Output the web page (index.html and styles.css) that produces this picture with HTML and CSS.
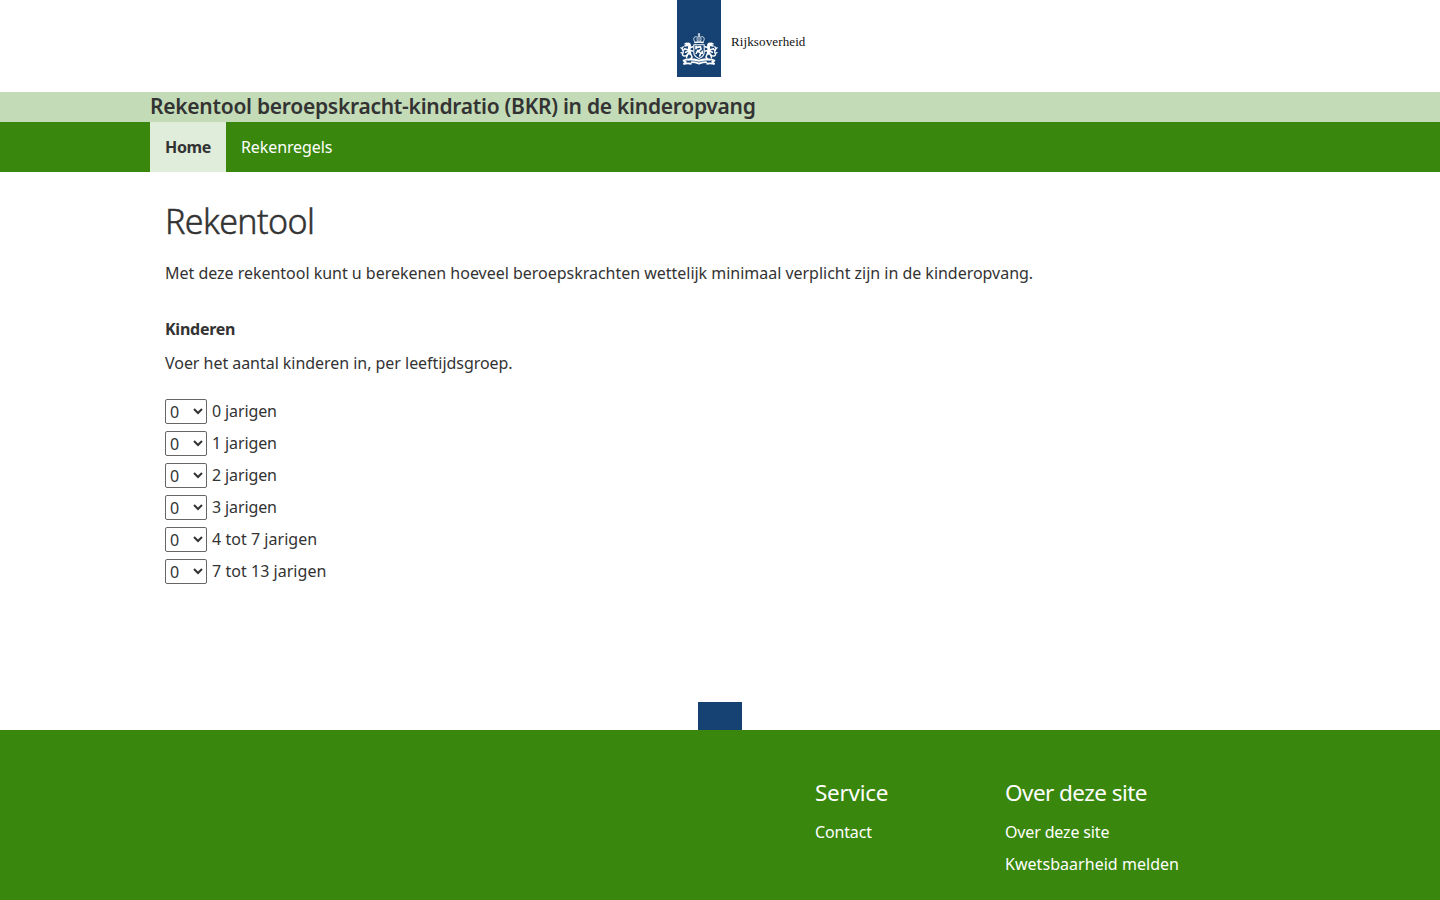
FILE: index.html
```html
<!DOCTYPE html>
<html lang="nl">
<head>
<meta charset="utf-8">
<title>Rekentool</title>
<link rel="stylesheet" href="styles.css">
</head>
<body>
<header class="logo">
  <div class="logo-mark">
    <svg class="arms" viewBox="0 0 38 33" width="38" height="33" aria-hidden="true">
      <g fill="none" stroke="#fff" stroke-linecap="round" stroke-linejoin="round">
        <path stroke-width=".8" d="M19 .4v2M18.2 1.2h1.6M14.8 8.8C12.6 5.6 14 3.4 16.4 3.6M23.2 8.8C25.4 5.6 24 3.4 21.6 3.6M17.4 8.1c-1-2.5-.2-4.5 1.6-5.4 1.8.9 2.6 2.9 1.6 5.4M19 2.6v5.4"/>
        <path stroke-width="1.5" d="M14.9 9.4q4.1-1 8.2 0"/>
        <path stroke-width="1.1" d="M13.8 11.7h10.4v7.8c0 3-2.3 4.8-5.2 6-2.9-1.2-5.2-3-5.2-6z"/>
        <path stroke-width="1.6" d="M17 14.4l3.4-.8.7 2.5-3.2 2.2 3 1.8-1.2 2.8M17.8 17.3l-1.6 3.2M22.2 18.2v2.2M16 13.3v2.4"/>
        <g id="lion">
          <path stroke-width="2.9" d="M7.2 11.2c1.6-.8 2.7.5 2.3 2.2-.5 2.1-.9 4.3.3 6.8"/>
          <path stroke-width="1.5" d="M5 11l1.7-.8M4.9 12.9l2.5-.4M9.4 15l3.3-1.3M9.3 17.6l3.4.3M9.2 20c-1.7 1-2.8 2.2-2.6 4.4M10.5 20.6l1.6 3.4-1.2 1.4M8.3 17L4.6 15.8l-1 1.3M8.2 18.2l-2.6 1"/>
          <path stroke-width="1.3" d="M7.4 22.4c-4.2 1.5-5.8-.2-4.4-2.2 1.1-1.7-.7-2.7-.8-4.2-.1-1 .5-1.8 1-2.3M1 19.7l1.6.6M.9 14.8l1.2 1"/>
        </g>
        <use href="#lion" transform="matrix(-1 0 0 1 38 0)"/>
        <path stroke-width="2.2" stroke-linecap="butt" d="M7.2 26.8c3.6-.9 6.4-.5 11.8.9 5.4-1.4 8.2-1.8 11.8-.9"/>
        <path stroke-width="1.9" stroke-linecap="butt" d="M7.4 26.2l-3.8 1.4 2.1 1.2-1.8 2.1c2.4-.7 4.8-.7 7.7-.1M30.6 26.2l3.8 1.4-2.1 1.2 1.8 2.1c-2.4-.7-4.8-.7-7.7-.1"/>
        <path stroke-width="1.7" d="M11.8 29.2c2.8 0 4.6.5 7.2 1.4 2.6-.9 4.4-1.4 7.2-1.4"/>
      </g>
    </svg>
  </div>
  <span class="logo-name">Rijksoverheid</span>
</header>
<div class="site-title"><div class="container">Rekentool beroepskracht-kindratio (BKR) in de kinderopvang</div></div>
<nav class="nav">
  <div class="container nav-list">
    <a class="nav-item nav-current">Home</a>
    <a class="nav-item">Rekenregels</a>
  </div>
</nav>
<main class="container content">
  <h1>Rekentool</h1>
  <p class="intro">Met deze rekentool kunt u berekenen hoeveel beroepskrachten wettelijk minimaal verplicht zijn in de kinderopvang.</p>
  <h2>Kinderen</h2>
  <p class="hint">Voer het aantal kinderen in, per leeftijdsgroep.</p>
  <form class="ages">
    <label class="age"><select><option>0</option></select><span>0 jarigen</span></label>
    <label class="age"><select><option>0</option></select><span>1 jarigen</span></label>
    <label class="age"><select><option>0</option></select><span>2 jarigen</span></label>
    <label class="age"><select><option>0</option></select><span>3 jarigen</span></label>
    <label class="age"><select><option>0</option></select><span class="wide">4 tot 7 jarigen</span></label>
    <label class="age"><select><option>0</option></select><span class="wide">7 tot 13 jarigen</span></label>
  </form>
</main>
<div class="payoff"></div>
<footer class="footer">
  <div class="container footer-columns">
    <section class="footer-column">
      <h3>Service</h3>
      <a>Contact</a>
    </section>
    <section class="footer-column">
      <h3>Over deze site</h3>
      <a>Over deze site</a>
      <a class="wide">Kwetsbaarheid melden</a>
    </section>
  </div>
</footer>
</body>
</html>
```

FILE: styles.css
```css
* { box-sizing: border-box; }
html, body { height: 100%; }
body {
  margin: 0;
  display: flex;
  flex-direction: column;
  overflow: hidden;
  background: #fff;
  color: #333;
  font: 400 16px/24px "Noto Sans", "Open Sans", sans-serif;
}
h1, h2, h3, p { margin: 0; }
.container { width: 1140px; margin: 0 auto; }
.logo { flex: none; display: flex; height: 92px; padding-left: 677px; }
.logo-mark { width: 44px; height: 77px; padding: 33px 3px 0; background: #154273; }
.arms { display: block; }
.logo-name {
  margin: 34px 0 0 10px;
  color: #111;
  font: 13px/16px "Liberation Serif", serif;
  letter-spacing: .12px;
}
.site-title {
  flex: none;
  height: 30px;
  background: #c4dbb7;
  font-size: 21px;
  font-weight: 600;
  line-height: 29px;
  letter-spacing: -.27px;
}
.nav { flex: none; height: 50px; background: #39870c; color: #fff; }
.nav-list { display: flex; }
.nav-item { padding: 0 15px; line-height: 50px; letter-spacing: -.1px; }
.nav-current { width: 76px; background: #e1eddb; color: #333; font-weight: 700; letter-spacing: -.35px; }
.content { flex: none; height: 530px; padding: 25px 15px 0; }
h1 { font-size: 34px; font-weight: 300; line-height: 48px; letter-spacing: -.6px; -webkit-text-stroke: .5px #333; }
.intro { margin-top: 16px; letter-spacing: -.02px; }
h2 { margin-top: 32px; font-size: 16px; line-height: 24px; letter-spacing: -.25px; }
.hint { margin-top: 10px; letter-spacing: -.04px; }
.ages { display: flex; flex-direction: column; gap: 7px; margin-top: 24px; }
.age { display: flex; gap: 5px; height: 25px; line-height: 24px; letter-spacing: -.12px; }
.age .wide { letter-spacing: .04px; }
select {
  width: 42px;
  height: 25px;
  margin: 0;
  padding: 0 0 4px;
  border: 1px solid #666;
  border-radius: 2px;
  background-color: #fff;
  color: #333;
  font: inherit;
}
.payoff { flex: none; width: 44px; height: 28px; margin: 0 auto; background: #154273; }
.footer { flex: 1; background: #39870c; color: #fff; }
.footer-columns { display: flex; justify-content: flex-end; padding-top: 45px; }
.footer-column { display: flex; flex-direction: column; width: 190px; }
.footer-column:last-child { width: 285px; }
h3 { margin-bottom: 9px; font-size: 22.5px; font-weight: 400; line-height: 36px; letter-spacing: -.55px; }
.footer-column:first-child h3 { letter-spacing: -.25px; }
.footer-column a { line-height: 24px; margin-bottom: 8px; letter-spacing: -.15px; }
.footer-column .wide { letter-spacing: .04px; }
```
